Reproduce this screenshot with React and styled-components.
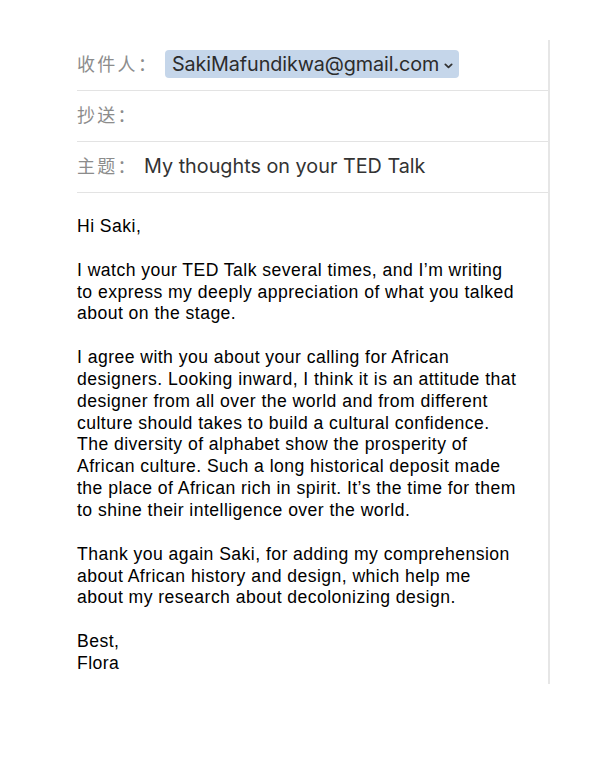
import styled, { createGlobalStyle } from "styled-components";

const Global = createGlobalStyle`
  body {
    margin: 0;
    background: #fff;
  }
`;

const to = "SakiMafundikwa@gmail.com";

const paragraphs = [
  ["Hi Saki,"],
  [
    "I watch your TED Talk several times, and I’m writing",
    "to express my deeply appreciation of what you talked",
    "about on the stage.",
  ],
  [
    "I agree with you about your calling for African",
    "designers. Looking inward, I think it is an attitude that",
    "designer from all over the world and from different",
    "culture should takes to build a cultural confidence.",
    "The diversity of alphabet show the prosperity of",
    "African culture. Such a long historical deposit made",
    "the place of African rich in spirit. It’s the time for them",
    "to shine their intelligence over the world.",
  ],
  [
    "Thank you again Saki, for adding my comprehension",
    "about African history and design, which help me",
    "about my research about decolonizing design.",
  ],
  ["Best,", "Flora"],
];

export default function App() {
  return (
    <>
      <Global />
      <Page>
        <Compose>
          <Field>
            <Label>收件人：</Label>
            <Recipient>
              {to}
              <Chevron viewBox="0 0 10 6">
                <path d="M1.5 1.2 L5 4.5 L8.5 1.2" />
              </Chevron>
            </Recipient>
          </Field>
          <Field>
            <Label>抄送：</Label>
          </Field>
          <Field>
            <Label>主题：</Label>
            <Subject>My thoughts on your TED Talk</Subject>
          </Field>
          <Body>
            {paragraphs.map((lines, i) => (
              <Para key={i}>
                {lines.map((l, j) => (
                  <Line key={j}>{l}</Line>
                ))}
              </Para>
            ))}
          </Body>
        </Compose>
      </Page>
    </>
  );
}

const Page = styled.div`
  padding: 40px 0 78px 77px;
`;

const Compose = styled.div`
  width: 471px;
  height: 644px;
  border-right: 2px solid #e6e6e6;
  display: flex;
  flex-direction: column;
`;

const Field = styled.div`
  height: 48px;
  padding-bottom: 2px;
  border-bottom: 1px solid #e3e3e3;
  display: flex;
  align-items: center;
`;

const Label = styled.span`
  font-family: "Noto Sans CJK SC", sans-serif;
  font-size: 18px;
  letter-spacing: 2.3px;
  line-height: 24px;
  color: #8c8c8c;
  width: 88px;
  flex: none;
  white-space: nowrap;
  margin-bottom: 3px;
`;

const Recipient = styled.span`
  display: inline-flex;
  align-items: center;
  gap: 5px;
  height: 28px;
  padding: 0 6px 0 7px;
  background: #c5d6ea;
  border-radius: 4px;
  font-family: Inter, "Open Sans", sans-serif;
  font-size: 19.8px;
  color: #2c2c2c;
  letter-spacing: -0.1px;
`;

const Chevron = styled.svg`
  width: 9px;
  height: 6px;
  margin-top: 3px;
  fill: none;
  stroke: #333;
  stroke-width: 2;
  stroke-linecap: round;
  stroke-linejoin: round;
`;

const Subject = styled.span`
  font-family: Inter, "Open Sans", sans-serif;
  font-size: 19.8px;
  color: #333;
  margin-left: -21px;
`;

const Body = styled.div`
  padding-top: 23px;
  font-family: "Liberation Sans", Arial, sans-serif;
  font-size: 17.6px;
  letter-spacing: 0.45px;
  line-height: 21.85px;
  color: #000;
  display: flex;
  flex-direction: column;
  gap: 21.85px;
`;

const Para = styled.div``;

const Line = styled.div`
  white-space: nowrap;
`;
